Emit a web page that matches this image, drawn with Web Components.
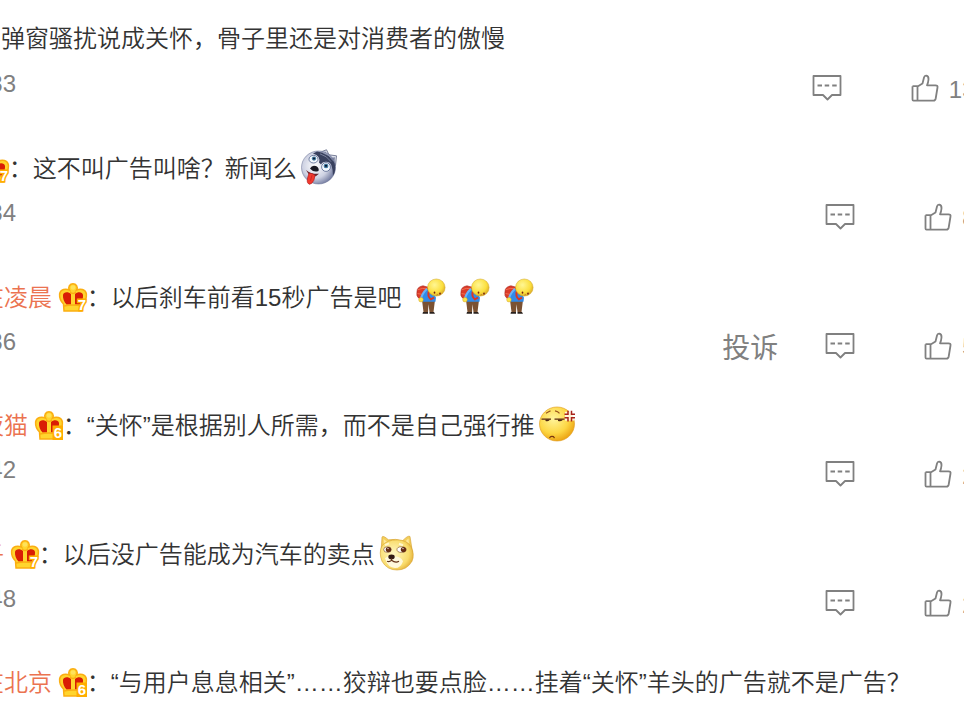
<!DOCTYPE html>
<html lang="zh-CN">
<head>
<meta charset="UTF-8">
<title>评论</title>
<style>
    html, body {
        margin: 0;
        height: 714px;
        overflow: hidden;
        background: #fff;
    }
    body {
        font-family: "Liberation Sans", "Noto Sans CJK SC", sans-serif;
        font-size: 24px;
        font-weight: 350;
        color: #333;
    }
</style>
</head>
<body>
<comment-list>
    <comment-item shift="1" time="33" likes="13">弹窗骚扰说成关怀，骨子里还是对消费者的傲慢</comment-item>
    <comment-item shift="-26" time="34" likes="8"><vip-crown slot="user" level="7"></vip-crown>：这不叫广告叫啥？新闻么<emo-icon name="husky"></emo-icon></comment-item>
    <comment-item shift="-20" time="36" likes="5" report><span slot="user">在凌晨</span><vip-crown slot="user" level="7"></vip-crown>：以后刹车前看15秒广告是吧 <emo-icon name="bow"></emo-icon><emo-icon name="bow"></emo-icon><emo-icon name="bow"></emo-icon></comment-item>
    <comment-item shift="-20" time="42" likes="2"><span slot="user">夜猫</span><vip-crown slot="user" level="6"></vip-crown>：“关怀”是根据别人所需，而不是自己强行推<emo-icon name="angry"></emo-icon></comment-item>
    <comment-item shift="-20" time="48" likes="2"><span slot="user">子</span><vip-crown slot="user" level="7"></vip-crown>：以后没广告能成为汽车的卖点<emo-icon name="doge"></emo-icon></comment-item>
    <comment-item shift="-20" time="" likes=""><span slot="user">在北京</span><vip-crown slot="user" level="6"></vip-crown>：“与用户息息相关”……狡辩也要点脸……挂着“关怀”羊头的广告就不是广告？</comment-item>
</comment-list>

<script>
class CommentList extends HTMLElement {
    constructor() {
        super();
        this.attachShadow({ mode: "open" }).innerHTML = `
            <style>
                :host {
                    display: flex;
                    flex-direction: column;
                    box-sizing: border-box;
                    width: 976px;
                    height: 714px;
                    overflow: hidden;
                    padding-top: 20px;
                }
            </style>
            <slot></slot>
        `;
    }
}

class VipCrown extends HTMLElement {
    connectedCallback() {
        const level = this.getAttribute("level");
        // level 6 sits on a solid tag, level 7 is only outlined
        const tag = level === "6" ? `<rect x="17.500" y="14.500" width="10.500" height="14.500" fill="#ffae00"/>` : "";
        this.attachShadow({ mode: "open" }).innerHTML = `
            <style>
                :host {
                    display: inline-block;
                    width: 28px;
                    height: 29px;
                    margin-left: 6.700px;
                    vertical-align: -6px;
                }
                svg { display: block; overflow: visible; }
                text { font: bold 15px "Liberation Sans", sans-serif; }
            </style>
            <svg width="28" height="29" viewBox="0 0 28 29">
                <path d="M5 28 4.500 21C1.500 18 .4 14 .6 11 1.500 6 7 5.500 10.500 7.200 8.500 3.800 11 .8 14 .8s5.500 3 3.500 6.400C21 5.500 26.500 6 27.400 11c.2 3-.9 7-3.900 10L23 28z" fill="#ffd52e" stroke="#fbae12" stroke-width="1.500"/>
                <path d="M4 12C4.500 8.500 9.500 8.500 12 11v10.500H7.500C5 19 3.700 15 4 12zM24 12c-.5-3.500-5.500-3.500-8-1v10.500h4.500C23 19 24.300 15 24 12z" fill="#d91d05"/>
                <path d="M11 9q3 3 6 0M5 23q9-2 18 0" fill="none" stroke="#fbae12" stroke-width="1.300"/>
                <circle cx="14" cy="4.500" r="2.300" fill="#ffe25b"/>
                ${tag}
                <text x="18.700" y="27" fill="#fff" stroke="#ffae00" stroke-width="${level === "6" ? 0 : 3}" paint-order="stroke">${level}</text>
            </svg>
        `;
    }
}

const EMO = {
    husky: `
        <defs><radialGradient id="g" cx=".4" cy=".45" r=".62"><stop offset="0" stop-color="#fff"/><stop offset=".6" stop-color="#cdd1e2"/><stop offset="1" stop-color="#6b749a"/></radialGradient></defs>
        <path d="M15 5 25.500 .8 28 6 35.500 7 34.500 17z" fill="#dfe2ed" stroke="#59617f" stroke-width=".8"/>
        <path d="M20 4l4.500-1.500 1.500 5zM30 9l4-.5-.5 5z" fill="#8289a3"/>
        <circle cx="17.500" cy="19" r="17" fill="url(#g)" stroke="#646c90" stroke-width=".5"/>
        <path d="M16 2.500Q29 4 33.500 14.500q2 8-1.500 13 0-6-1.500-10.500-1-4-5.500-4-4 0-5 3l-2-2Q20 7 12 4.500z" fill="#39415f"/>
        <path d="M19 5q7 2 11 8M22 4q7 2 10 8" fill="none" stroke="#959cb6" stroke-width=".7"/>
        <ellipse cx="12.500" cy="10.500" rx="4.500" ry="3.900" fill="#f5faff" stroke="#53628a" stroke-width=".8"/>
        <ellipse cx="25" cy="18.500" rx="4.400" ry="4.500" fill="#f5faff" stroke="#53628a" stroke-width=".8"/>
        <circle cx="13" cy="9.800" r="2.200" fill="#4179a0"/><circle cx="25" cy="17.500" r="2.400" fill="#4179a0"/>
        <circle cx="13" cy="9.800" r="1" fill="#071429"/><circle cx="25" cy="17.300" r="1.100" fill="#071429"/>
        <path d="M9 20q2-4 6-2.500 3.500 2 2.500 5-5 2-8.500-2.500z" fill="#1b1b25"/>
        <path d="M5 21.500q5 4.500 13 4-3 3-5 3l-5-2z" fill="#6b2630"/>
        <path d="M8 25q3-.5 6 2-.5 6-3.500 8.500-3 2-4-1Q5.500 32 8 25z" fill="#f2392d" stroke="#b51f22" stroke-width=".7"/>
        <path d="M11 27 9.500 32.500" stroke="#b51f22" stroke-width=".7"/>`,
    bow: `
        <defs><radialGradient id="g" cx=".4" cy=".35" r=".65"><stop offset="0" stop-color="#fff694"/><stop offset=".7" stop-color="#fbdf3e"/><stop offset="1" stop-color="#dfb02a"/></radialGradient></defs>
        <path d="M9 22.500h13l-1.500 12.500h-4l-1-8-.5 8h-4.500z" fill="#7b5233"/>
        <path d="M10 35h5v1.800H9.500zM16.500 35h4.500l1 1.800h-5.500z" fill="#29211d"/>
        <path d="M4 14Q4 9 10 8l7 2-5 8-6 3Q3 19 4 14z" fill="#da3b29" stroke="#a82b24" stroke-width=".6"/>
        <path d="M5 12q4-2 9-1M4.500 16l6 1" fill="none" stroke="#f26e50"/>
        <path d="M8.500 18Q11 11 18 11l5 9-.5 4.500h-13z" fill="#2f8bea"/>
        <path d="M14 11q-5 5-6 10" fill="none" stroke="#69b2f8" stroke-width="2"/>
        <path d="M16 13q-2 6 2 9l3-2" fill="none" stroke="#db3525" stroke-width="2"/>
        <circle cx="8" cy="22.300" r="2.300" fill="#fce54a" stroke="#d4a021" stroke-width=".5"/>
        <circle cx="23.300" cy="9.800" r="8.800" fill="url(#g)" stroke="#d1a321" stroke-width=".5"/>
        <ellipse cx="21.500" cy="15" rx=".8" ry="1.200" fill="#78210e"/><ellipse cx="27" cy="16" rx=".8" ry="1.200" fill="#78210e"/>
        <path d="M23.500 17.500q1-.6 1.700 0" fill="none" stroke="#a8561b" stroke-width=".7"/>`,
    angry: `
        <defs><radialGradient id="g" cx=".4" cy=".35" r=".65"><stop offset="0" stop-color="#fff49c"/><stop offset=".65" stop-color="#fdd744"/><stop offset="1" stop-color="#eda817"/></radialGradient></defs>
        <circle cx="18" cy="18.500" r="17.500" fill="url(#g)" stroke="#df9717" stroke-width=".6"/>
        <path d="M7 7.500q3-2 4.500-2.500M16 5q3 .5 4.500 2.500" fill="none" stroke="#9a551c" stroke-width="1.200"/>
        <path d="M2.500 13.500h9.500M15.500 13.500h10" stroke="#5e2c12" stroke-width="1.400"/>
        <path d="M6.500 14h4.500q-1 2.500-4.500 1.500zM19 14h5q-1 2.500-5 1.500z" fill="#4d2411"/>
        <path d="M10.500 33q1-2.500 4-1.500l1 1.500" fill="none" stroke="#793610" stroke-width="1.200"/>
        <path d="M26 6h9v9H26z" fill="#fff" opacity=".8"/>
        <path d="M25.500 8.500H29V5M32.500 5v3.500h3.500M25.500 12H29v4M32.500 16v-4h3.500" fill="none" stroke="#a8231a" stroke-width="1.500"/>`,
    doge: `
        <defs><radialGradient id="g" cx=".4" cy=".45" r=".62"><stop offset="0" stop-color="#fff7c2"/><stop offset=".75" stop-color="#f9dc6c"/><stop offset="1" stop-color="#e5b23c"/></radialGradient></defs>
        <path d="M2 18 3 2Q4 0 9.500 5q7-1.500 14 1Q29 0 31 1.500L33.500 18z" fill="#f3cf5b" stroke="#d39a2a" stroke-width=".6"/>
        <path d="M4.500 4 8 7l-3 3zM29.500 3.500 30 10l-4-3z" fill="#ffe99c"/>
        <path d="M3 11Q8 5 18 5t14 7q4 8 1 15-5 9-15 9T3 27Q-.5 18 3 11z" fill="url(#g)" stroke="#d7a12d" stroke-width=".6"/>
        <path d="M6 24q4-4 10-2 6 0 8 5-2 7-8 7-7 0-10-10z" fill="#fff9dc"/>
        <path d="M6 10.500l4-2M20 9l4 1.500" stroke="#fff7cf" stroke-width="2"/>
        <ellipse cx="8.500" cy="15" rx="3.800" ry="2.900" fill="#fff" stroke="#73441c" stroke-width=".6"/><ellipse cx="22.500" cy="15" rx="4.500" ry="2.900" fill="#fff" stroke="#73441c" stroke-width=".6"/>
        <circle cx="9.500" cy="15" r="2.700" fill="#652b12"/><circle cx="24.500" cy="15" r="2.700" fill="#652b12"/>
        <circle cx="9" cy="14" r=".7" fill="#fff"/><circle cx="24" cy="14" r=".7" fill="#fff"/>
        <ellipse cx="12.500" cy="22.500" rx="3.200" ry="2.500" fill="#321b13"/>
        <path d="M12.500 24v2q-2 2-4.500 1M12.500 26q4 3 7.500 1" fill="none" stroke="#65351a" stroke-width="1.200"/>`
};

class EmoIcon extends HTMLElement {
    connectedCallback() {
        this.attachShadow({ mode: "open" }).innerHTML = `
            <style>
                :host {
                    display: inline-block;
                    width: 36px;
                    height: 36px;
                    margin: 0 4px;
                    vertical-align: -8px;
                }
                :host([name="bow"]) svg { transform: translateX(1px); }
                svg { display: block; overflow: visible; }
            </style>
            <svg width="36" height="36" viewBox="0 0 36 37" preserveAspectRatio="none">${EMO[this.getAttribute("name")]}</svg>
        `;
    }
}

class CommentItem extends HTMLElement {
    connectedCallback() {
        const time = this.getAttribute("time");
        const likes = this.getAttribute("likes");
        const report = this.hasAttribute("report") ? `<span class="report">投诉</span>` : "";
        this.attachShadow({ mode: "open" }).innerHTML = `
            <style>
                :host {
                    display: block;
                    height: 128.8px;
                    flex: none;
                }
                .text {
                    height: 38px;
                    line-height: 38px;
                    margin-left: ${this.getAttribute("shift")}px;
                    white-space: nowrap;
                }
                ::slotted([slot="user"]) { color: #eb7350; }
                .info {
                    display: flex;
                    justify-content: space-between;
                    align-items: flex-start;
                    padding-top: 12px;
                    color: #808080;
                    line-height: 28px;
                }
                time { margin-left: -10.700px; }
                .actions {
                    display: flex;
                    align-items: center;
                    height: 36px;
                }
                .report { font-size: 28px; font-weight: 400; margin-right: 47px; padding-top: 6px; }
                .reply { margin-right: 69px; }
                .like { margin-right: 10px; }
                svg { display: block; fill: none; stroke: #808080; stroke-width: 1.8; stroke-linejoin: round; }
                .count { padding-top: 3px; margin-right: .5px; }
            </style>
            <div class="text"><slot name="user"></slot><slot></slot></div>
            ${time ? `
            <div class="info">
                <time>${time}</time>
                <div class="actions">
                    ${report}
                    <svg class="reply" width="30" height="28" viewBox="0 0 30 28">
                        <path d="M1.500 2h27v19h-8.500l-4.500 4.500-4.500-4.500H1.500z"/>
                        <path d="M5.500 11.500h4.500M12.700 11.500h4.500M20.200 11.500h4.500"/>
                    </svg>
                    <svg class="like" width="28" height="28" viewBox="0 0 28 28">
                        <path d="M1.500 12.200H7L11.500 9.500 13 3.500Q13.500 1.500 15.300 1.700 17.800 2.300 17.500 5.500 17.300 8.500 16 11.300H24.500Q27 11.500 26.500 13.500L24.700 24.500Q24.300 26.600 22.500 26.600H2.500Q1.500 26.600 1.500 25.600V12.200M6.500 12.200V26.600"/>
                    </svg>
                    <span class="count">${likes}</span>
                </div>
            </div>` : ""}
        `;
    }
}

customElements.define("comment-list", CommentList);
customElements.define("vip-crown", VipCrown);
customElements.define("emo-icon", EmoIcon);
customElements.define("comment-item", CommentItem);
</script>
</body>
</html>
